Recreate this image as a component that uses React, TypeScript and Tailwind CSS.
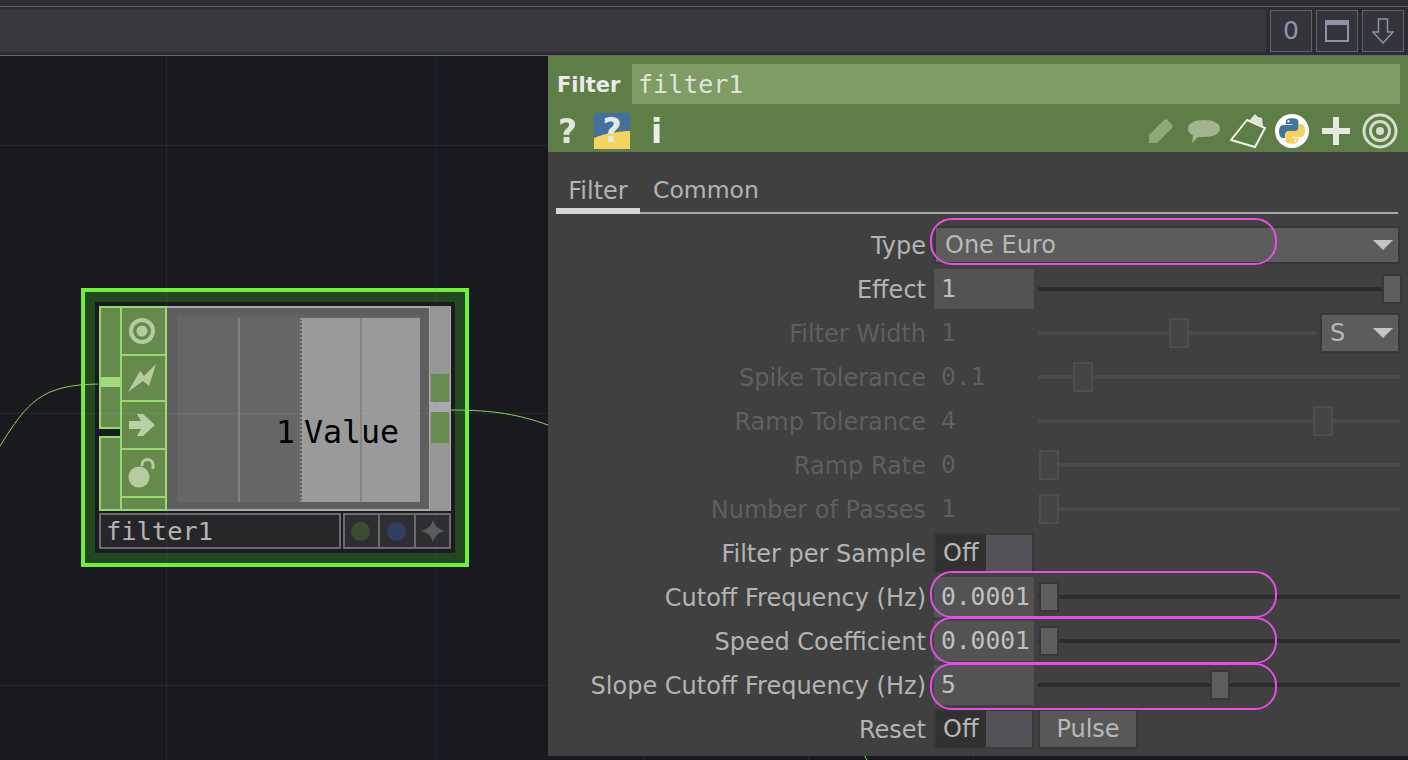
import React from 'react';

const MONO = 'font-["DejaVu_Sans_Mono",monospace]';

interface RowProps {
  label: string;
  disabled?: boolean;
  children: React.ReactNode;
}

const Row: React.FC<RowProps> = ({ label, disabled, children }) => (
  <div className="flex h-[44px] items-center">
    <div className={`w-[386px] shrink-0 pr-[8px] pt-[1px] text-right text-[24px] whitespace-nowrap ${disabled ? 'text-[#5f5f5f]' : 'text-[#b4b4b4]'}`}>
      {label}
    </div>
    {children}
  </div>
);

const Value: React.FC<{ value: string; disabled?: boolean }> = ({ value, disabled }) => (
  <div className={`flex h-[40px] w-[100px] shrink-0 items-center pl-[7px] text-[24.6px] whitespace-nowrap ${MONO} ${disabled ? 'text-[#5f5f5f]' : 'bg-[#535353] text-[#c0c0c0]'}`}>
    {value}
  </div>
);

const Slider: React.FC<{ pos: number; disabled?: boolean; narrow?: boolean }> = ({ pos, disabled, narrow }) => (
  <div className={`relative ml-[4px] h-[4px] ${narrow ? 'w-[278px]' : 'w-[362px]'} ${disabled ? 'bg-[#4a4a4a]' : 'bg-[#2c2c2c]'}`}>
    <div
      className={`absolute top-[-13px] h-[30px] w-[20px] border-2 ${disabled ? 'border-[#4e4e4e] bg-[#454545]' : 'border-[#383838] bg-[#5e5e5e]'}`}
      style={{ left: pos }}
    />
  </div>
);

const Toggle: React.FC = () => (
  <div className="flex h-[40px] w-[100px] shrink-0 border-2 border-[#383838] text-[24px] text-[#b8b8b8]">
    <div className="flex w-[50px] items-center bg-[#313131] pl-[7px]">Off</div>
    <div className="flex-1 bg-[#525258]" />
  </div>
);

const Caret: React.FC = () => (
  <svg width="20" height="10" viewBox="0 0 20 10" className="shrink-0">
    <path d="M0 0h20L10 10z" fill="#c4c4c4" />
  </svg>
);

const PYTHON_HALF =
  'M54.9 0C50.3 0 45.9.4 42 1.1 30.5 3.1 28.4 7.4 28.4 15.2V25.5H55.6V29H18.2C10.3 29 3.4 33.7 1.2 42.8-1.3 53.3-1.4 59.8 1.2 70.8 3.2 78.9 7.8 84.8 15.7 84.8H25V72.3C25 63.3 32.8 55.3 42 55.3H69.2C76.7 55.3 82.7 49.1 82.7 41.6V15.2C82.7 7.9 76.6 2.5 69.2 1.2 64.6.4 59.7 0 54.9 0ZM40.2 8.4C43 8.4 45.3 10.7 45.3 13.5 45.3 16.3 43 18.6 40.2 18.6 37.4 18.6 35.1 16.3 35.1 13.5 35.1 10.7 37.4 8.4 40.2 8.4Z';

const PythonLogo: React.FC = () => (
  <svg width="34" height="34" viewBox="-18 -18 146 146">
    <circle cx="55" cy="55" r="73" fill="#ffffff" />
    <path fill="#44759f" d={PYTHON_HALF} />
    <path transform="rotate(180 55 55)" fill="#f6d05c" d={PYTHON_HALF} />
  </svg>
);

const HeaderIcons: React.FC = () => (
  <div className="flex h-[48px] items-center pl-[10px] pr-[10px] pt-[6px]">
    <span className='w-[26px] font-["DejaVu_Sans",sans-serif] text-[33px] leading-none font-bold text-[#dfe6da] blur-[0.4px]'>?</span>
    <div className="relative ml-[10px] mt-[-1px] flex h-[36px] w-[36px] items-center justify-center">
      <svg className="absolute inset-0" width="36" height="36" viewBox="0 0 36 36">
        <rect width="36" height="36" fill="#f6d25f" />
        <path d="M0 0h36v18C26 18 12 20 0 25z" fill="#44709f" />
      </svg>
      <span className='relative font-["DejaVu_Sans",sans-serif] text-[33px] leading-none font-bold text-[#e3e9df]'>?</span>
    </div>
    <span className='ml-[21px] font-["DejaVu_Sans",sans-serif] text-[33px] leading-none font-bold text-[#e9ede5] blur-[0.3px]'>i</span>

    <div className="ml-auto flex items-center">
      {/* pencil */}
      <svg width="28" height="28" viewBox="0 0 28 28" className="blur-[0.5px]">
        <path d="M2 26V18L17 3q2-1.500 3.500 0l4.500 4.500q1.500 2 0 3.500L10 26z" fill="#8fa878" />
      </svg>
      {/* comment */}
      <svg width="34" height="26" viewBox="0 0 34 26" className="ml-[12px] blur-[0.5px]">
        <path d="M17 2c9 0 16 3 16 8.500S26 19 17 19c-2 0-4 0-6 0l-6 6 1-7.500C3 16 1 13.500 1 10.500 1 5 8 2 17 2z" fill="#a0b58b" />
      </svg>
      {/* clipboard */}
      <svg width="38" height="36" viewBox="0 0 38 36" className="ml-[9px] blur-[0.3px]">
        <path d="M17 7 1 27l24 7 10-19z" fill="none" stroke="#eef2ea" strokeWidth="2" />
        <path d="M19 8l6-7 3 3 4 1 1 8z" fill="#dfe6d8" />
      </svg>
      <div className="ml-[7px]">
        <PythonLogo />
      </div>
      {/* plus */}
      <svg width="28" height="28" viewBox="0 0 28 28" className="ml-[13px] blur-[0.3px]">
        <path d="M11 0h6v11h11v6H17v11h-6V17H0v-6h11z" fill="#e6ebe1" />
      </svg>
      <svg width="36" height="36" viewBox="0 0 36 36" className="ml-[12px] blur-[0.3px]">
        <circle cx="18" cy="18" r="16" fill="none" stroke="#d6dfcc" strokeWidth="3" />
        <circle cx="18" cy="18" r="9.500" fill="none" stroke="#d6dfcc" strokeWidth="3" />
        <circle cx="18" cy="18" r="4" fill="#d6dfcc" />
      </svg>
    </div>
  </div>
);

const Panel: React.FC = () => (
  <div className='absolute left-[548px] top-[56px] h-[700px] w-[860px] bg-[#404040] font-["DejaVu_Sans",sans-serif]'>
    <div className="h-[96px] bg-[#5f7d46]">
      <div className="flex h-[48px] items-end pl-[9px] pr-[8px]">
        <div className="w-[75px] pb-[4px] text-[21px] leading-[30px] font-bold text-[#e9ece6]">Filter</div>
        <div className={`flex h-[40px] flex-1 items-center bg-[#7e9c64] pl-[6px] pt-[2px] text-[25px] text-[#dfe6d8] ${MONO}`}>filter1</div>
      </div>
      <HeaderIcons />
    </div>

    <div className="ml-[8px] mr-[10px] flex h-[62px] items-end border-b-2 border-[#a8a8a8] text-[#b4b4b4]">
      <div className="-mb-[2px] flex h-[50px] w-[84px] items-start justify-center border-b-[6px] border-[#d6d6d6] pt-[11px] text-[24px] leading-[32px]">Filter</div>
      <div className="flex h-[50px] items-start pl-[13px] pt-[12px] text-[23.5px] leading-[32px]">Common</div>
    </div>

    <div className="mt-[9px]">
      <Row label="Type">
        <div className="flex h-[38px] w-[466px] items-center justify-between border-2 border-[#383838] bg-[#5c5c5c] pl-[9px] pr-[5px] text-[24px] text-[#b8b8b8]">
          One Euro
          <Caret />
        </div>
      </Row>
      <Row label="Effect">
        <Value value="1" />
        <Slider pos={344} />
      </Row>
      <Row label="Filter Width" disabled>
        <Value value="1" disabled />
        <Slider pos={131} disabled narrow />
        <div className="ml-[4px] flex h-[40px] w-[80px] items-center justify-between border-2 border-[#383838] bg-[#5c5c5c] pl-[8px] pr-[5px] text-[24px] text-[#b8b8b8]">
          S
          <Caret />
        </div>
      </Row>
      <Row label="Spike Tolerance" disabled>
        <Value value="0.1" disabled />
        <Slider pos={35} disabled />
      </Row>
      <Row label="Ramp Tolerance" disabled>
        <Value value="4" disabled />
        <Slider pos={275} disabled />
      </Row>
      <Row label="Ramp Rate" disabled>
        <Value value="0" disabled />
        <Slider pos={1} disabled />
      </Row>
      <Row label="Number of Passes" disabled>
        <Value value="1" disabled />
        <Slider pos={1} disabled />
      </Row>
      <Row label="Filter per Sample">
        <Toggle />
      </Row>
      <Row label="Cutoff Frequency (Hz)">
        <Value value="0.0001" />
        <Slider pos={1} />
      </Row>
      <Row label="Speed Coefficient">
        <Value value="0.0001" />
        <Slider pos={1} />
      </Row>
      <Row label="Slope Cutoff Frequency (Hz)">
        <Value value="5" />
        <Slider pos={172} />
      </Row>
      <Row label="Reset">
        <Toggle />
        <div className="ml-[4px] flex h-[40px] w-[100px] items-center justify-center border-2 border-[#383838] bg-[#585858] text-[24px] text-[#b8b8b8]">Pulse</div>
      </Row>
    </div>

    {/* highlight outlines drawn over the parameters */}
    <div className="absolute left-[382px] top-[162px] h-[47px] w-[347px] rounded-[22px] border-2 border-[#e64fe6]" />
    <div className="absolute left-[382px] top-[515px] h-[47px] w-[347px] rounded-[22px] border-2 border-[#e64fe6]" />
    <div className="absolute left-[382px] top-[561px] h-[47px] w-[347px] rounded-[22px] border-2 border-[#e64fe6]" />
    <div className="absolute left-[382px] top-[607px] h-[47px] w-[347px] rounded-[22px] border-2 border-[#e64fe6]" />
  </div>
);

const FlagCell: React.FC<{ h: string; children?: React.ReactNode }> = ({ h, children }) => (
  <div className={`flex ${h} items-center justify-center border-b-2 border-[#97d96f] pr-[3px] last:border-b-0`}>{children}</div>
);

const Node: React.FC = () => (
  <div className="absolute left-[81px] top-[232px] h-[279px] w-[388px] border-4 border-[#6ff03d] bg-[#23471f] p-[10px]">
    <div className="h-[251px] w-[360px] bg-[#1a1b20] p-[4px]">
      <div className="flex h-[205px] w-[352px] border-y-2 border-[#a9a9ae] bg-[#5e5e5e]">
        {/* inlets */}
        <div className="-my-[2px] flex w-[21px] shrink-0 flex-col">
          <div className="flex h-[123px] flex-col border-2 border-r-0 border-[#97d96f] bg-[#668a4c]">
            <div className="mt-[69px] h-[10px] bg-[#a3d97a]" />
          </div>
          <div className="h-[7px] bg-[#1a1b20]" />
          <div className="h-[75px] border-2 border-r-0 border-[#97d96f] bg-[#668a4c]" />
        </div>
        {/* flags */}
        <div className="-my-[2px] flex w-[47px] shrink-0 flex-col border-2 border-[#97d96f] bg-[#668a4c]">
          <FlagCell h="h-[48px]">
            <svg width="28" height="28" viewBox="0 0 28 28" className="blur-[0.7px]">
              <circle cx="14" cy="14" r="11" fill="none" stroke="#b4cc9f" strokeWidth="4" />
              <circle cx="14" cy="14" r="5.500" fill="#b4cc9f" />
            </svg>
          </FlagCell>
          <FlagCell h="h-[46px]">
            <svg width="30" height="30" viewBox="0 0 30 30" className="blur-[0.7px]">
              <path d="M1 29 13 8l4 5L29 1l-7 22-6-5z" fill="#b4cc9f" />
            </svg>
          </FlagCell>
          <FlagCell h="h-[48px]">
            <svg width="28" height="24" viewBox="0 0 28 24" className="blur-[0.7px]">
              <path d="M1 8h12L9 1h6l12 11-12 11H9l4-7H1z" fill="#b9d0a6" />
            </svg>
          </FlagCell>
          <FlagCell h="h-[48px]">
            <svg width="28" height="30" viewBox="0 0 28 30" className="blur-[0.7px]">
              <circle cx="11" cy="19" r="10.500" fill="#b4cc9f" />
              <path d="M14 8V7a5.500 5.500 0 0 1 11 0v4" fill="none" stroke="#b4cc9f" strokeWidth="3" />
            </svg>
          </FlagCell>
          <FlagCell h="flex-1" />
        </div>
        {/* viewer */}
        <div className="relative flex min-w-0 flex-1 py-[7px] pl-[10px] pr-[9px]">
          <div className="relative flex flex-1 border-t-[3px] border-[#636363]">
            <div className="flex w-[123px] bg-[#666666]">
              <div className="ml-[61px] h-full w-[2px] bg-[#808080]" />
            </div>
            <div className="h-full w-0 border-l-2 border-dotted border-[#8f8f8f]" />
            <div className="flex flex-1 bg-[#9a9a9a]">
              <div className="ml-[58px] h-full w-[2px] bg-[#848484]" />
            </div>
            <div className={`absolute left-[99px] top-[94px] flex text-[31.6px] leading-[40px] text-black ${MONO}`}>
              <span>1</span>
              <span className="ml-[9px]">Value</span>
            </div>
          </div>
        </div>
        {/* outlets */}
        <div className="-my-[2px] flex w-[22px] shrink-0 flex-col border-x border-[#a9a9ae] bg-[#969696]">
          <div className="mt-[68px] ml-[1px] h-[28px] w-[18px] bg-[#6a8b4f]" />
          <div className="h-[10px] bg-[#a8a8ae]" />
          <div className="ml-[1px] h-[31px] w-[18px] bg-[#6a8b4f]" />
        </div>
      </div>
      <div className="mt-[2px] flex h-[36px] gap-[2px]">
        <div className={`flex w-[242px] items-center border-2 border-[#6c6c70] bg-[#262629] pl-[5px] text-[25.4px] text-[#b4b4b4] ${MONO}`}>filter1</div>
        <div className="flex flex-1 border-2 border-[#6c6c70] bg-[#2d2e2f]">
          <div className="flex w-[35px] items-center justify-center border-r-2 border-[#6c6c70] pr-[2px]">
            <div className="h-[19px] w-[19px] rounded-full bg-[#3e4b33] blur-[0.5px]" />
          </div>
          <div className="flex w-[36px] items-center justify-center border-r-2 border-[#6c6c70] pr-[2px]">
            <div className="h-[19px] w-[19px] rounded-full bg-[#2f3f62] blur-[0.5px]" />
          </div>
          <div className="flex flex-1 items-center justify-center">
            <svg width="24" height="24" viewBox="0 0 22 22" className="blur-[0.5px]">
              <path d="M11 0c1 6 4 9 11 11-7 2-10 5-11 11-1-6-4-9-11-11 7-2 10-5 11-11z" fill="#5b5c5c" />
            </svg>
          </div>
        </div>
      </div>
    </div>
  </div>
);

const Canvas: React.FC = () => (
  <div className="relative h-[704px] overflow-hidden bg-[#191a1f]">
    <Node />

    {/* network grid runs over the node */}
    <div className="absolute left-[166px] top-0 h-full w-px bg-white/[0.06]" />
    <div className="absolute left-[436px] top-0 h-full w-px bg-[#7070ff]/[0.1]" />
    <div className="absolute left-[644px] top-0 h-full w-px bg-white/[0.06]" />
    <div className="absolute left-[808px] top-0 h-full w-px bg-white/[0.06]" />
    <div className="absolute left-[973px] top-0 h-full w-px bg-white/[0.06]" />
    <div className="absolute left-0 top-[89px] h-px w-full bg-white/[0.06]" />
    <div className="absolute left-0 top-[357px] h-px w-full bg-white/[0.06]" />
    <div className="absolute left-0 top-[629px] h-px w-full bg-white/[0.06]" />

    {/* wires */}
    <svg className="absolute left-0 top-0" width="900" height="704" viewBox="0 0 900 704">
      <path d="M0 390C28 345 42 329 98 328" fill="none" stroke="#8fce5f" strokeWidth="1" />
      <path d="M450 354C496 354 520 359 548 369" fill="none" stroke="#8fce5f" strokeWidth="1" />
      <path d="M864 699 867 704" fill="none" stroke="#8fce5f" strokeWidth="1" />
    </svg>
  </div>
);

const TopBar: React.FC = () => (
  <div className="h-[56px] bg-[#2c2d32]">
    <div className="h-[6px]" />
    <div className="h-px bg-[#5e5e62]" />
    <div className="flex h-[45px]">
      <div className="mt-[3px] flex-1 bg-[#37383d]" />
      <div className="flex gap-[4px] px-[4px] pt-[3px]">
        <div className='flex h-[42px] w-[42px] items-center justify-center border border-[#5f6068] bg-[#34353a] font-["DejaVu_Sans",sans-serif] text-[25px] text-[#8d93a8]'>0</div>
        <div className="flex h-[42px] w-[42px] items-center justify-center border border-[#5f6068] bg-[#34353a]">
          <svg width="24" height="22" viewBox="0 0 24 22">
            <rect x="1" y="1" width="22" height="20" fill="none" stroke="#8d93a8" strokeWidth="2" />
            <rect x="1" y="1" width="22" height="4" fill="#8d93a8" />
          </svg>
        </div>
        <div className="flex h-[42px] w-[42px] items-center justify-center border border-[#5f6068] bg-[#34353a]">
          <svg width="22" height="26" viewBox="0 0 22 26">
            <path d="M6.500 1h9v13H21L11 25 1 14h5.500z" fill="none" stroke="#8d93a8" strokeWidth="1.500" />
          </svg>
        </div>
      </div>
    </div>
    <div className="h-[3px]" />
    <div className="h-px bg-[#66676b]" />
  </div>
);

const App: React.FC = () => (
  <div className="relative h-[760px] w-[1408px] overflow-hidden bg-[#191a1f]">
    <TopBar />
    <Canvas />
    <Panel />
  </div>
);

export default App;
